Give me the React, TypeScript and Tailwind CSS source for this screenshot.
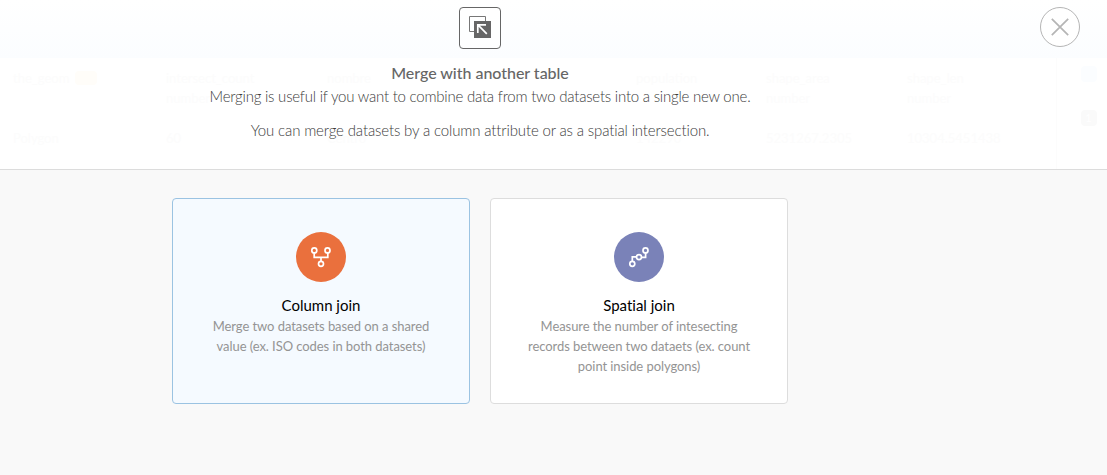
import React from "react";

function MergeIcon() {
  return (
    <svg width="24" height="24" viewBox="0 0 24 24" fill="none" aria-hidden="true">
      <path d="M6 15.5H1.5V0.5H17.5V5" stroke="#777" />
      <rect x="6" y="5" width="17" height="17" fill="#666" />
      <path d="M9.8 17V8.8H18M10.2 9.2l8.6 8.6" stroke="#fff" strokeWidth="1.7" />
    </svg>
  );
}

function ColumnIcon() {
  return (
    <svg width="50" height="50" viewBox="0 0 50 50" fill="none" stroke="#fff" strokeWidth="1.7" aria-hidden="true">
      <circle cx="18.3" cy="18.4" r="2.5" />
      <circle cx="31.5" cy="18.4" r="2.5" />
      <circle cx="25" cy="31.8" r="2.5" />
      <path d="M18.2 21V25.3H31.8V21M25 25.3V29.3" />
    </svg>
  );
}

function SpatialIcon() {
  return (
    <svg width="50" height="50" viewBox="0 0 50 50" fill="none" stroke="#fff" strokeWidth="1.7" aria-hidden="true">
      <circle cx="18.3" cy="31.8" r="2.5" />
      <circle cx="25" cy="25.1" r="2.5" />
      <circle cx="31.5" cy="18.4" r="2.5" />
      <path d="M18.3 29.3V24.8H22.5M27.5 25.4H31.6V21" />
    </svg>
  );
}

const columns = [
  { name: "the_geom", type: "", value: "Polygon", width: "w-[153px]" },
  { name: "intersect_count", type: "number", value: "60", width: "w-[161px]" },
  { name: "nombre", type: "", value: "Centro", width: "w-[309px]" },
  { name: "population", type: "", value: "142290", width: "w-[130px]" },
  { name: "shape_area", type: "number", value: "5231267.2305", width: "w-[141px]" },
  { name: "shape_len", type: "number", value: "10304.5451438", width: "w-[149px]" },
];

function FadedTable() {
  return (
    <div aria-hidden="true" className="absolute inset-0 overflow-hidden text-[13px] leading-5 text-[#fcfcfc]">
      <div className="h-[58px] bg-linear-to-b from-white to-[#fbfdff]" />
      <div className="flex h-[111px] pl-[13px] pt-[10px]">
        {columns.map((c) => (
          <div key={c.name} className={`${c.width} shrink-0`}>
            <div className="flex items-center gap-1.5">
              {c.name}
              {c.name === "the_geom" && <span className="h-3.5 w-[22px] rounded-sm bg-[#fffdf9]" />}
            </div>
            <div className="h-5">{c.type}</div>
            <div className="mt-5">{c.value}</div>
          </div>
        ))}
        <div className="-mt-[10px] flex w-[64px] shrink-0 flex-col items-center gap-7 border-l border-[#fcfcfc] pt-[8px]">
          <span className="h-4 w-4 rounded-sm bg-[#fbfdff]" />
          <span className="h-4 w-4 rounded-sm bg-[#fafafa] text-center text-[11px] leading-4 text-white">1</span>
        </div>
      </div>
    </div>
  );
}

type CardProps = {
  title: string;
  lines: string[];
  icon: React.ReactNode;
  color: string;
  frame: string;
};

function Card({ title, lines, icon, color, frame }: CardProps) {
  return (
    <button className={`flex h-[206px] w-[298px] flex-col items-center rounded-[4px] border pt-[33px] ${frame}`}>
      <span className={`h-[50px] w-[50px] rounded-full ${color}`}>{icon}</span>
      <span className="mt-[13px] text-[15px] leading-5 text-black [font-variant-ligatures:none]">{title}</span>
      <span className="mt-px text-center text-[13px] leading-5 tracking-[-0.07px] text-[#949494]">
        {lines.map((line) => (
          <span key={line} className="block whitespace-nowrap">{line}</span>
        ))}
      </span>
    </button>
  );
}

export default function App() {
  return (
    <div className="flex h-[475px] w-[1107px] flex-col overflow-hidden bg-[#f9f9f9] font-['Lato',sans-serif]">
      <header className="relative h-[170px] shrink-0 border-b border-[#dcdcdc] bg-white">
        <FadedTable />
        <div className="relative flex w-[960px] flex-col items-center pt-[7px] text-[15px] text-[#666]">
          <div className="flex h-[42px] w-[42px] items-center justify-center rounded-[4px] border border-[#666] bg-white/50">
            <MergeIcon />
          </div>
          <h1 className="mt-3 text-[16px] leading-[23px] font-medium tracking-[-0.03px]">Merge with another table</h1>
          <p className="mt-px leading-[23px] font-light tracking-[-0.22px] text-[#3c3c3c]">
            Merging is useful if you want to combine data from two datasets into a single new one.
          </p>
          <p className="mt-[11px] leading-[23px] font-light tracking-[-0.14px] text-[#3c3c3c]">
            You can merge datasets by a column attribute or as a spatial intersection.
          </p>
        </div>
        <button
          aria-label="Close"
          className="absolute top-[7px] right-[27px] flex h-10 w-10 items-center justify-center rounded-full border border-[#b5b5b5] bg-white"
        >
          <svg width="20" height="20" viewBox="0 0 20 20" stroke="#b5b5b5" strokeWidth="1.7" aria-hidden="true">
            <path d="M1.8 1.8l16.4 16.4M18.2 1.8L1.8 18.2" />
          </svg>
        </button>
      </header>
      <main className="flex w-[960px] justify-center gap-5 pt-7">
        <Card
          title="Column join"
          lines={["Merge two datasets based on a shared", "value (ex. ISO codes in both datasets)"]}
          icon={<ColumnIcon />}
          color="bg-[#ea703d]"
          frame="border-[#9bc3e2] bg-[#f5faff]"
        />
        <Card
          title="Spatial join"
          lines={["Measure the number of intesecting", "records between two dataets (ex. count", "point inside polygons)"]}
          icon={<SpatialIcon />}
          color="bg-[#7a82b8]"
          frame="border-[#ddd] bg-white"
        />
      </main>
    </div>
  );
}
